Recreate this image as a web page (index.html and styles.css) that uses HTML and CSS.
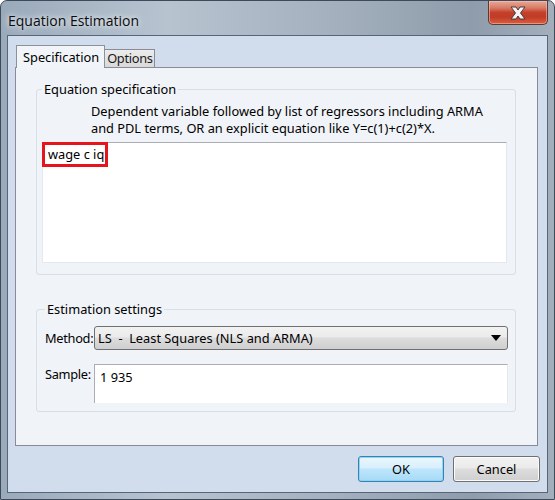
FILE: index.html
```html
<!DOCTYPE html>
<html>
<head>
<meta charset="utf-8">
<link rel="stylesheet" href="styles.css">
</head>
<body>
<div class="window">
  <div class="titlebar">
    <span class="title">Equation Estimation</span>
    <div class="close">
      <svg width="20" height="14" viewBox="0 0 20 14"><path d="M3 1 H8 L10 4 L12 1 H17 L12.5 7 L17 13 H12 L10 10 L8 13 H3 L7.5 7 Z" fill="#f4f4f4" stroke="#4a3a3a" stroke-width="1" stroke-linejoin="round"/></svg>
    </div>
  </div>
  <div class="client">
    <div class="tabs">
      <div class="tab active">Specification</div>
      <div class="tab">Options</div>
    </div>
    <div class="panel">
      <fieldset class="group g1">
        <legend>Equation specification</legend>
        <p class="desc">Dependent variable followed by list of regressors including ARMA<br>and PDL terms, OR an explicit equation like Y=c(1)+c(2)*X.</p>
        <div class="edit">
          <span class="hl">wage c iq</span>
        </div>
      </fieldset>
      <fieldset class="group g2">
        <legend>Estimation settings</legend>
        <div class="row">
          <span class="lbl">Method:</span>
          <div class="combo">
            <span>LS&nbsp; -&nbsp; Least Squares (NLS and ARMA)</span>
            <svg width="10" height="6" viewBox="0 0 10 6"><path d="M0 0 H10 L5 6 Z" fill="#000"/></svg>
          </div>
        </div>
        <div class="row r2">
          <span class="lbl">Sample:</span>
          <div class="sample">1 935</div>
        </div>
      </fieldset>
    </div>
    <div class="buttons">
      <div class="btn default">OK</div>
      <div class="btn">Cancel</div>
    </div>
  </div>
</div>
</body>
</html>
```
FILE: styles.css
```css
* { box-sizing: border-box; }
html, body { margin: 0; padding: 0; background: #fff; }
body { font-family: "Noto Sans", "DejaVu Sans", sans-serif; font-size: 12.8px; color: #000; }

.window {
  width: 555px;
  height: 500px;
  border: 1px solid #3d4a5a;
  border-radius: 7px 7px 0 0;
  padding: 0 6px 6px 6px;
  background: linear-gradient(90deg, #9aaabb 0%, #b7c3cf 30%, #a4b0bd 60%, #8e9cab 85%, #a3afbb 100%);
  display: flex;
  flex-direction: column;
}
.titlebar {
  height: 34px;
  display: flex;
  justify-content: space-between;
  align-items: flex-start;
}
.title {
  margin-top: 10px;
  margin-left: 1px;
  line-height: 20px;
  font-size: 14px;
  font-family: "Open Sans", "Noto Sans", sans-serif;
  color: #0c0c0c;
  text-shadow: 0 0 8px #e8eef4, 0 0 4px #e8eef4;
}
.close {
  width: 60px;
  height: 24px;
  border: 1px solid #5c3a36;
  border-top: none;
  border-radius: 0 0 5px 5px;
  background: linear-gradient(180deg, #e8a898 0%, #d77b66 30%, #c4402a 50%, #c13c26 70%, #d9603f 100%);
  display: flex;
  align-items: center;
  justify-content: center;
  box-shadow: inset 0 0 0 1px rgba(255,200,190,0.5);
}
.close svg { display: block; }

.client {
  flex: 1;
  border: 1px solid #56657a;
  background: #d1ddec;
  padding: 8px 7px 9px 7px;
  display: flex;
  flex-direction: column;
}
.tabs {
  display: flex;
  align-items: flex-end;
  margin-left: 1px;
  height: 23px;
}
.tab {
  height: 18px;
  padding: 0 1px 0 2px;
  border: 1px solid #898c95;
  border-bottom: none;
  background: linear-gradient(180deg, #ececec, #d9d9d9);
  line-height: 17px;
  margin-left: -1px;
  color: #1a1a1a;
  letter-spacing: -0.3px;
}
.tab.active {
  height: 23px;
  margin-bottom: -1px;
  margin-left: 0;
  padding: 0 5px 0 6px;
  background: #f1f4f9;
  line-height: 22px;
  position: relative;
  z-index: 1;
  border-color: #8d9198;
  color: #000;
  letter-spacing: 0;
}
.panel {
  width: 523px;
  height: 379px;
  border: 1px solid #898c95;
  background: #f0f3f8;
  padding: 13px 20px 0 20px;
}
.group {
  margin: 0;
  width: 480px;
  border: 1px solid #d5dfe5;
  border-radius: 3px;
  min-inline-size: 0;
}
.group legend {
  padding: 0 2px;
  margin: 0;
  line-height: 16px;
  height: 16px;
}
.g1 { padding: 0 8px 11px 5px; }
.desc {
  margin: 6px 0 0 49px;
  line-height: 17px;
}
.edit {
  margin-top: 5px;
  height: 121px;
  background: #fff;
  border: 1px solid #e3e9ef;
  border-top-color: #abadb3;
  position: relative;
}
.hl {
  position: absolute;
  left: -1px;
  top: -1px;
  width: 66px;
  height: 25px;
  border: 3px solid #e8141c;
  padding-left: 3px;
  line-height: 19px;
  white-space: nowrap;
}
.g2 {
  margin-top: 26px;
  padding: 0 7px 8px 8px;
}
.row {
  display: grid;
  grid-template-columns: 49px 1fr;
  align-items: center;
  margin-top: 9px;
}
.lbl { white-space: nowrap; letter-spacing: -0.3px; }
.row.r2 {
  margin-top: 14px;
  align-items: start;
}
.row.r2 .lbl { margin-top: 1px; }
.combo {
  height: 24px;
  border: 1px solid #707070;
  border-radius: 3px;
  background: linear-gradient(180deg, #f2f2f2 0%, #ebebeb 45%, #dddddd 50%, #cfcfcf 100%);
  display: flex;
  align-items: center;
  justify-content: space-between;
  padding: 0 5px 0 3px;
}
.combo svg { display: block; margin-right: 1px; }
.sample {
  height: 39px;
  background: #fff;
  border: 1px solid #e3e9ef;
  border-top-color: #abadb3;
  border-left-color: #abadb3;
  border-bottom: none;
  padding: 3px 0 0 5px;
  line-height: 18px;
}
.buttons {
  display: flex;
  justify-content: flex-end;
  gap: 9px;
  margin-top: 10px;
}
.btn {
  width: 86px;
  height: 26px;
  border: 1px solid #707070;
  border-radius: 3px;
  background: linear-gradient(180deg, #f2f2f2 0%, #ebebeb 45%, #dddddd 50%, #cfcfcf 100%);
  display: flex;
  align-items: center;
  justify-content: center;
  box-shadow: inset 0 0 0 1px #fbfbfb;
}
.btn + .btn { width: 87px; }
.btn.default {
  border-color: #3c7fb1;
  background: linear-gradient(180deg, #eaf6fd 0%, #d9f0fc 45%, #bee6fd 50%, #a7d9f5 100%);
  box-shadow: inset 0 0 0 1px #8ad6f5;
}
```
